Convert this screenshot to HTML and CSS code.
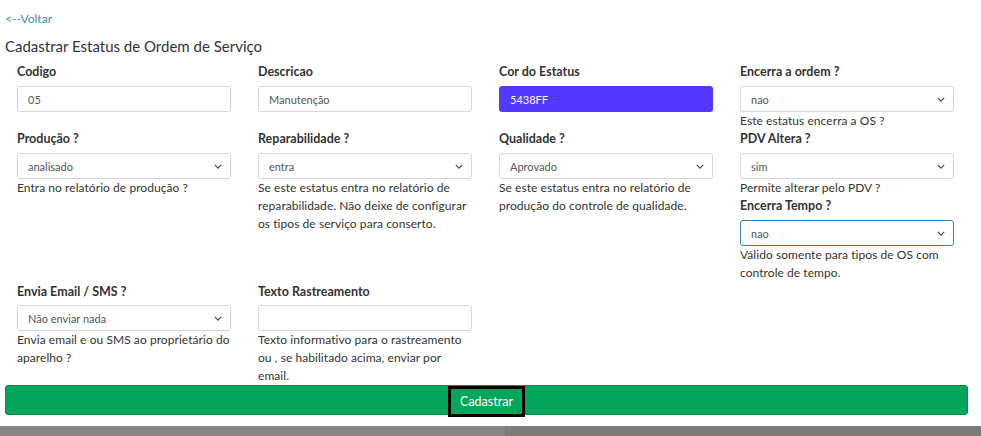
FILE: index.html
```html
<!DOCTYPE html>
<html lang="pt-BR">
<head>
  <meta charset="UTF-8">
  <title>Cadastrar Estatus de Ordem de Serviço</title>
  <link rel="stylesheet" href="styles.css">
</head>
<body>
  <div class="page">
    <a class="back-link" href="#">&lt;--Voltar</a>
    <h1 class="page-title">Cadastrar Estatus de Ordem de Serviço</h1>

    <form class="status-form">
      <div class="field f-codigo">
        <label>Codigo</label>
        <input class="control" type="text" value="05">
      </div>
      <div class="field f-descricao">
        <label>Descricao</label>
        <input class="control" type="text" value="Manutenção">
      </div>
      <div class="field f-cor">
        <label>Cor do Estatus</label>
        <input class="control color-control" type="text" value="5438FF" style="background:#5438FF">
      </div>
      <div class="field f-encerra">
        <label>Encerra a ordem ?</label>
        <div class="select-wrap">
          <select class="control"><option>nao</option></select>
          <svg class="chevron" viewBox="0 0 10 6"><path d="M1 1l4 4 4-4"/></svg>
        </div>
        <p class="help">Este estatus encerra a OS ?</p>
      </div>

      <div class="field f-producao">
        <label>Produção ?</label>
        <div class="select-wrap">
          <select class="control"><option>analisado</option></select>
          <svg class="chevron" viewBox="0 0 10 6"><path d="M1 1l4 4 4-4"/></svg>
        </div>
        <p class="help">Entra no relatório de produção ?</p>
      </div>
      <div class="field f-repara">
        <label>Reparabilidade ?</label>
        <div class="select-wrap">
          <select class="control"><option>entra</option></select>
          <svg class="chevron" viewBox="0 0 10 6"><path d="M1 1l4 4 4-4"/></svg>
        </div>
        <p class="help">Se este estatus entra no relatório de reparabilidade. Não deixe de configurar os tipos de serviço para conserto.</p>
      </div>
      <div class="field f-qualidade">
        <label>Qualidade ?</label>
        <div class="select-wrap">
          <select class="control"><option>Aprovado</option></select>
          <svg class="chevron" viewBox="0 0 10 6"><path d="M1 1l4 4 4-4"/></svg>
        </div>
        <p class="help">Se este estatus entra no relatório de produção do controle de qualidade.</p>
      </div>
      <div class="field f-pdv">
        <label>PDV Altera ?</label>
        <div class="select-wrap">
          <select class="control"><option>sim</option></select>
          <svg class="chevron" viewBox="0 0 10 6"><path d="M1 1l4 4 4-4"/></svg>
        </div>
        <p class="help">Permite alterar pelo PDV ?</p>
      </div>

      <div class="field f-tempo">
        <label>Encerra Tempo ?</label>
        <div class="select-wrap">
          <select class="control focused"><option>nao</option></select>
          <svg class="chevron" viewBox="0 0 10 6"><path d="M1 1l4 4 4-4"/></svg>
        </div>
        <p class="help">Válido somente para tipos de OS com controle de tempo.</p>
      </div>

      <div class="field f-email">
        <label>Envia Email / SMS ?</label>
        <div class="select-wrap">
          <select class="control"><option>Não enviar nada</option></select>
          <svg class="chevron" viewBox="0 0 10 6"><path d="M1 1l4 4 4-4"/></svg>
        </div>
        <p class="help">Envia email e ou SMS ao proprietário do aparelho ?</p>
      </div>
      <div class="field f-texto">
        <label>Texto Rastreamento</label>
        <input class="control" type="text" value="">
        <p class="help">Texto informativo para o rastreamento ou , se habilitado acima, enviar por email.</p>
      </div>
    </form>

    <div class="submit-bar">
      <button class="submit-btn" type="button">Cadastrar</button>
    </div>
  </div>

  <div class="footer-strip">
    <div class="strip-left"></div>
    <div class="strip-right"></div>
  </div>
</body>
</html>
```

FILE: styles.css
```css
body {
  margin: 0;
  font-family: 'Lato', 'Liberation Sans', Arial, sans-serif;
  color: #333;
  background: #fff;
}
.page {
  padding: 11px 13px 0 5px;
}
.back-link {
  display: block;
  color: #3c8dbc;
  font-size: 12px;
  line-height: 16px;
  text-decoration: none;
}
.page-title {
  margin: 8px 0 6px 0;
  font-size: 15px;
  font-weight: 400;
  line-height: 22px;
  color: #333;
}
.status-form {
  display: grid;
  grid-template-columns: repeat(4, 1fr);
  grid-template-rows: auto auto auto auto;
  margin: 0;
}
.field {
  padding: 0 15px 0 12px;
}
.field label {
  display: block;
  font-size: 12.5px;
  font-weight: 700;
  line-height: 18px;
  margin-bottom: 5px;
}
.f-email,
.f-texto {
  padding-top: 1px;
}
.f-email label,
.f-texto label {
  margin-bottom: 4px;
}
.control {
  display: block;
  box-sizing: border-box;
  width: 214px;
  height: 26px;
  margin: 0;
  padding: 0 10px;
  border: 1px solid #d2d6de;
  border-radius: 3px;
  background: #fff;
  font-family: inherit;
  font-size: 11px;
  color: #555;
  outline: none;
}
select.control {
  appearance: none;
  -webkit-appearance: none;
}
.control.focused {
  border-color: #3c7fc0;
}
.color-control {
  border-color: transparent;
  color: #fff;
}
.select-wrap {
  position: relative;
  width: 214px;
}
.chevron {
  position: absolute;
  right: 9px;
  top: 11px;
  width: 8px;
  height: 5px;
  fill: none;
  stroke: #444;
  stroke-width: 1.4;
  pointer-events: none;
}
.help {
  margin: 0 -1px 0 0;
  font-size: 12px;
  letter-spacing: 0.06px;
  line-height: 18px;
}
.f-codigo { grid-column: 1; grid-row: 1; }
.f-descricao { grid-column: 2; grid-row: 1; }
.f-cor { grid-column: 3; grid-row: 1; }
.f-encerra { grid-column: 4; grid-row: 1; }
.f-producao { grid-column: 1; grid-row: 2; }
.f-repara { grid-column: 2; grid-row: 2 / span 2; }
.f-qualidade { grid-column: 3; grid-row: 2 / span 2; }
.f-pdv { grid-column: 4; grid-row: 2; }
.f-tempo { grid-column: 4; grid-row: 3; }
.f-email { grid-column: 1; grid-row: 4; }
.f-texto { grid-column: 2; grid-row: 4; }

.submit-bar {
  display: flex;
  justify-content: center;
  height: 30px;
  box-sizing: border-box;
  background: #00a65a;
  border: 1px solid #008d4c;
  border-radius: 3px;
}
.submit-btn {
  margin-top: 0;
  height: 31px;
  padding: 0 9px;
  border: 3px solid #000;
  background: transparent;
  color: #fff;
  font-family: inherit;
  font-size: 12.5px;
}
.footer-strip {
  display: flex;
  height: 10px;
  margin-top: 11px;
}
.strip-left {
  width: 505px;
  background: #858585;
}
.strip-right {
  flex: 1;
  background: #7c7c7b;
}
```
